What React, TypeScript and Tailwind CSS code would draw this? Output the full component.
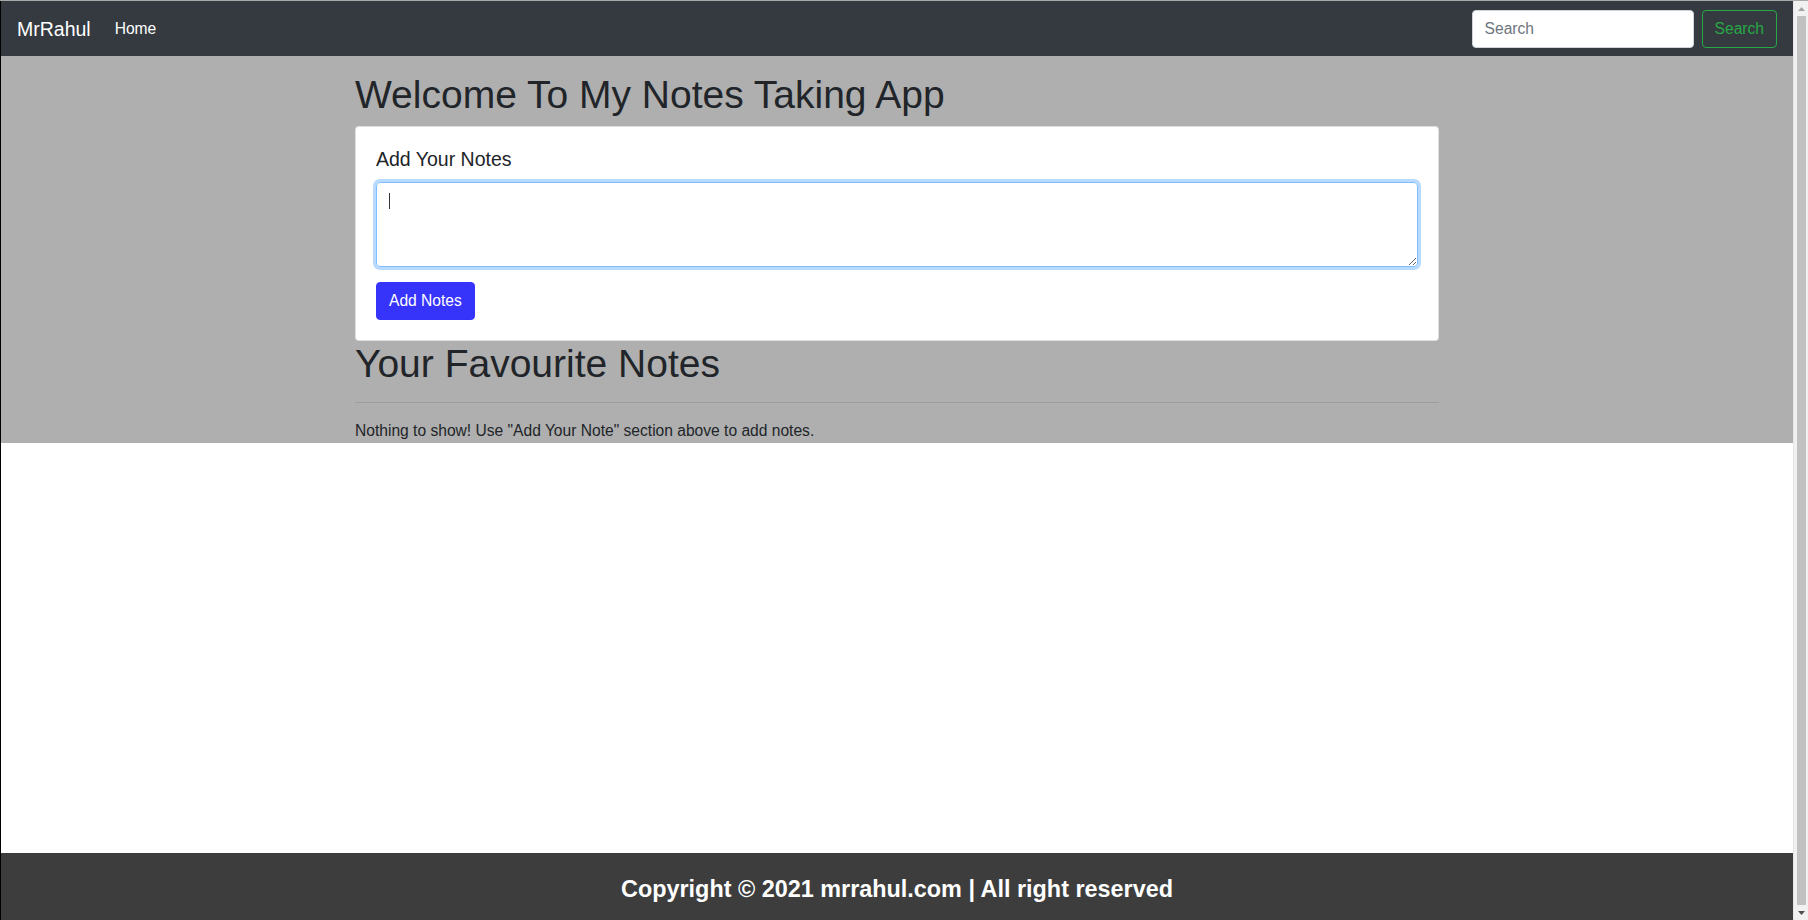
import { useState } from "react";

function Scrollbar() {
  return (
    <div className="flex w-[15px] flex-col items-center border-l border-[#e6e6e6] bg-[#f1f1f1]">
      {/* up arrow, disabled look since page is at top */}
      <div className="flex h-[15px] w-full items-center justify-center">
        <svg width="7" height="4" viewBox="0 0 7 4">
          <path d="M0 4 L3.5 0 L7 4 Z" fill="#a3a3a3" />
        </svg>
      </div>
      <div className="w-[9px] flex-1 rounded-[1px] bg-[#c1c1c1]" />
      <div className="flex h-[15px] w-full items-center justify-center">
        <svg width="7" height="4" viewBox="0 0 7 4">
          <path d="M0 0 L7 0 L3.5 4 Z" fill="#505050" />
        </svg>
      </div>
    </div>
  );
}

function Navbar() {
  return (
    <nav className="flex h-[55px] items-center justify-between bg-[#343a40] px-4">
      <div className="flex items-center">
        <a href="#" className="mr-4 text-[19.5px] leading-[30px] text-white">
          MrRahul
        </a>
        <a href="#" className="px-2 text-[15.6px] leading-6 text-white">
          Home
        </a>
      </div>
      <form className="flex items-center" onSubmit={(e) => e.preventDefault()}>
        <input
          type="search"
          placeholder="Search"
          className="mr-2 h-[38px] w-[222px] rounded-[4px] border border-[#ced4da] bg-white px-3 text-[15.6px] text-[#495057] placeholder:text-[#6c757d] focus:outline-none"
        />
        <button
          type="submit"
          className="h-[38px] rounded-[4px] border border-[#28a745] px-3 text-[15.6px] text-[#28a745]"
        >
          Search
        </button>
      </form>
    </nav>
  );
}

function NoteForm() {
  const [text, setText] = useState("");

  return (
    <div className="rounded-[4px] border border-black/[0.125] bg-white p-5">
      <h5 className="mb-[11px] text-[19.5px] leading-6 text-[#212529]">Add Your Notes</h5>
      <div className="relative mb-[15px]">
        <textarea
          rows={3}
          value={text}
          onChange={(e) => setText(e.target.value)}
          className="block h-[85px] w-full rounded-[4px] border border-[#80bdff] px-3 py-1.5 text-[15.6px] leading-6 text-[#495057] shadow-[0_0_0_3px_rgba(0,123,255,0.28)] outline-none"
        />
        {/* caret drawn so the focused look survives the screenshot */}
        {text === "" && (
          <span className="pointer-events-none absolute left-[13px] top-[11px] h-[16px] w-px bg-[#333]" />
        )}
      </div>
      <button className="h-[38px] rounded-[4px] border border-[#3633fb] bg-[#3633fb] px-3 text-[15.6px] leading-6 text-white">
        Add Notes
      </button>
    </div>
  );
}

export default function App() {
  return (
    <div className="flex h-screen w-full overflow-hidden border-t border-[#a8a8a8] font-['Liberation_Sans',Arial,sans-serif]">
      <div className="flex flex-1 flex-col border-l border-black bg-white">
        <div className="bg-[#afafaf]">
          <Navbar />
          <div className="mx-auto w-[1084px] pt-[15px] text-[#212529]">
            <h1 className="mb-[7px] text-[39px] leading-[48px]">Welcome To My Notes Taking App</h1>
            <NoteForm />
            <h1 className="text-[39px] leading-[46px]">Your Favourite Notes</h1>
            <hr className="mb-4 mt-[15px] border-t border-black/10" />
            <p className="text-[15.6px] leading-6">
              Nothing to show! Use "Add Your Note" section above to add notes.
            </p>
          </div>
        </div>
        <footer className="mt-auto flex h-[67px] items-start justify-center bg-[#3d3d3d] pt-[18px]">
          <p className="text-[23.4px] font-bold leading-9 text-white">
            Copyright © 2021 mrrahul.com | All right reserved
          </p>
        </footer>
      </div>
      <Scrollbar />
    </div>
  );
}
